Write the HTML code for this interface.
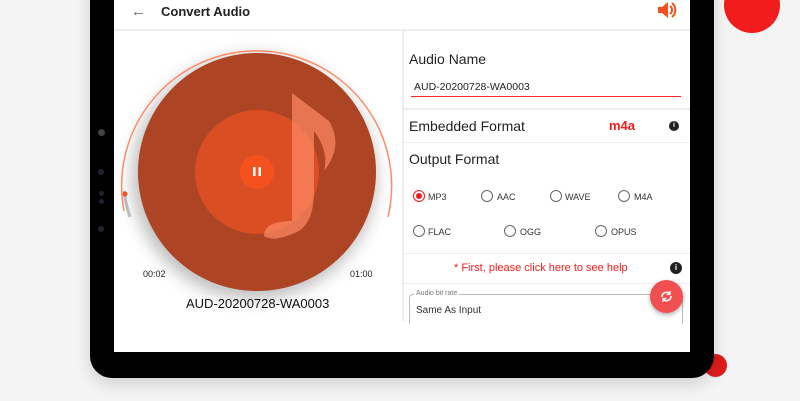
<!DOCTYPE html>
<html><head><style>
*{margin:0;padding:0;box-sizing:border-box}
body{width:800px;height:401px;background:#f4f4f4;font-family:"Liberation Sans",sans-serif;position:relative;overflow:hidden}
.dev{position:absolute;left:90px;top:-30px;width:624px;height:408px;background:#000;border-radius:22px;box-shadow:0 6px 16px rgba(0,0,0,.15)}
.scr{position:absolute;left:114px;top:0;width:576px;height:352px;background:#fff}
.t{position:absolute;white-space:nowrap}
.hr{position:absolute;background:#eee}
.rad{position:absolute;width:12px;height:12px;border:1.3px solid #666;border-radius:50%}
.rl{position:absolute;font-size:9px;color:#333}
</style></head><body>
<div style="position:absolute;left:724px;top:-23px;width:56px;height:56px;border-radius:50%;background:#f21c1c"></div>
<div style="position:absolute;left:704px;top:354px;width:23px;height:23px;border-radius:50%;background:#e01b1b"></div>
<div class="dev"></div>
<div style="position:absolute;left:98px;top:129px;width:7px;height:7px;border-radius:50%;background:#444"></div>
<div style="position:absolute;left:98px;top:169px;width:6px;height:6px;border-radius:50%;background:#223"></div>
<div style="position:absolute;left:99px;top:191px;width:5px;height:5px;border-radius:50%;background:#223"></div>
<div style="position:absolute;left:99px;top:199px;width:5px;height:5px;border-radius:50%;background:#223"></div>
<div style="position:absolute;left:98px;top:226px;width:6px;height:6px;border-radius:50%;background:#223"></div>
<div class="scr">
 <div class="hr" style="left:0;top:29px;width:576px;height:2px"></div>
 <div class="t" style="left:17px;top:3px;font-size:15px;color:#666">&#8592;</div>
 <div class="t" style="left:47px;top:4px;font-size:13px;font-weight:bold;color:#222">Convert Audio</div>
 <svg style="position:absolute;left:542px;top:0" width="22" height="20" viewBox="0 0 22 20"><path d="M2 7h4l6-5v16l-6-5H2z" fill="#f4511e"/><path d="M14 6a5 5 0 0 1 0 8M16 3a9 9 0 0 1 0 14" stroke="#f4511e" stroke-width="2" fill="none"/></svg>
 <div class="hr" style="left:288px;top:31px;width:2px;height:290px"></div>
 <svg style="position:absolute;left:0;top:31px" width="288" height="290">
  <defs><filter id="bl" x="-30%" y="-30%" width="160%" height="160%"><feGaussianBlur stdDeviation="8"/></filter></defs>
  <circle cx="140" cy="146" r="122" fill="#888" opacity=".55" filter="url(#bl)"/>
  <path d="M10 180 A135 135 0 1 1 274 186" stroke="#ff8a65" stroke-width="1.5" fill="none"/>
  <path d="M10 160 A135 135 0 0 0 16 186" stroke="#bbb" stroke-width="3" fill="none"/>
  <circle cx="11" cy="163" r="2.5" fill="#f4511e"/>
  <circle cx="143" cy="141" r="119" fill="#ad4524"/>
  <circle cx="143" cy="141" r="62" fill="#d94e22"/>
  <path d="M178 62 L178 190 Q150 190 150 205 Q160 212 185 200 Q200 190 200 160 L200 100 Q215 120 210 140 Q230 115 215 90 Q195 75 178 62Z" fill="#ff8a65" opacity=".7"/>
  <circle cx="143" cy="141" r="17" fill="#f4511e"/>
  <rect x="139" y="136" width="2.5" height="9" fill="#fff"/><rect x="144.5" y="136" width="2.5" height="9" fill="#fff"/>
 </svg>
 <div class="t" style="left:29px;top:269px;font-size:9px;color:#222">00:02</div>
 <div class="t" style="left:236px;top:269px;font-size:9px;color:#222">01:00</div>
 <div class="t" style="left:72px;top:296px;font-size:13px;color:#111">AUD-20200728-WA0003</div>
 <div class="t" style="left:295px;top:51px;font-size:14px;color:#222">Audio Name</div>
 <div class="t" style="left:300px;top:81px;font-size:10.5px;color:#222">AUD-20200728-WA0003</div>
 <div style="position:absolute;left:297px;top:96px;width:270px;height:1px;background:#f22"></div>
 <div class="hr" style="left:290px;top:108px;width:286px;height:2px"></div>
 <div class="t" style="left:295px;top:118px;font-size:14px;color:#222">Embedded Format</div>
 <div class="t" style="left:495px;top:118px;font-size:13px;font-weight:bold;color:#f21c1c">m4a</div>
 <div style="position:absolute;left:555px;top:121px;width:10px;height:10px;border-radius:50%;background:#222;color:#fff;font-size:7px;text-align:center;line-height:10px;font-weight:bold">i</div>
 <div class="hr" style="left:290px;top:142px;width:286px;height:1px"></div>
 <div class="t" style="left:295px;top:151px;font-size:14px;color:#222">Output Format</div>
 <div class="rad" style="left:299px;top:190px;border-color:#f21c1c"><div style="margin:2px;width:6px;height:6px;border-radius:50%;background:#f21c1c"></div></div>
 <div class="rl" style="left:314px;top:192px">MP3</div>
 <div class="rad" style="left:367px;top:190px"></div><div class="rl" style="left:383px;top:192px">AAC</div>
 <div class="rad" style="left:436px;top:190px"></div><div class="rl" style="left:451px;top:192px">WAVE</div>
 <div class="rad" style="left:504px;top:190px"></div><div class="rl" style="left:520px;top:192px">M4A</div>
 <div class="rad" style="left:299px;top:225px"></div><div class="rl" style="left:314px;top:227px">FLAC</div>
 <div class="rad" style="left:390px;top:225px"></div><div class="rl" style="left:406px;top:227px">OGG</div>
 <div class="rad" style="left:481px;top:225px"></div><div class="rl" style="left:497px;top:227px">OPUS</div>
 <div class="hr" style="left:290px;top:253px;width:286px;height:1px"></div>
 <div class="t" style="left:340px;top:262px;font-size:11px;color:#f21c1c">* First, please click here to see help</div>
 <div style="position:absolute;left:556px;top:262px;width:12px;height:12px;border-radius:50%;background:#222;color:#fff;font-size:8px;text-align:center;line-height:12px;font-weight:bold">i</div>
 <div class="hr" style="left:290px;top:283px;width:286px;height:1px"></div>
 <div style="position:absolute;left:295px;top:294px;width:274px;height:30px;border:1px solid #bbb;border-bottom:none;border-radius:4px 4px 0 0"></div>
 <div class="t" style="left:300px;top:290px;font-size:7px;color:#777;background:#fff;padding:0 2px">Audio bit rate</div>
 <div class="t" style="left:302px;top:305px;font-size:10px;color:#333">Same As Input</div>
 <div style="position:absolute;left:536px;top:280px;width:33px;height:33px;border-radius:50%;background:#f25050;box-shadow:0 2px 5px rgba(0,0,0,.3)"></div>
 <svg style="position:absolute;left:545px;top:289px" width="15" height="15" viewBox="0 0 15 15"><path d="M3 8a4.5 4.5 0 0 1 8-3M12 7a4.5 4.5 0 0 1-8 3" stroke="#fff" stroke-width="1.5" fill="none"/><path d="M11 2v3.5H7.5M4 13V9.5h3.5" stroke="#fff" stroke-width="1.3" fill="none"/></svg>
</div>
</body></html>
